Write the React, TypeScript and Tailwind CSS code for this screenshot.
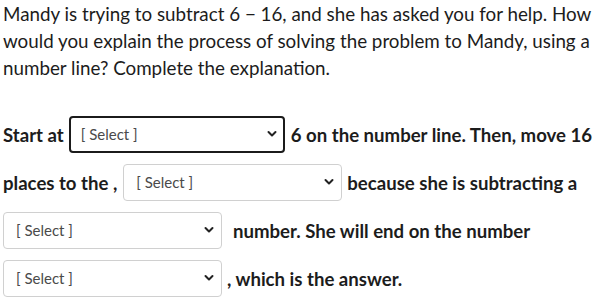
import { useState } from "react";

function Dropdown({ width, focused }: { width: string; focused?: boolean }) {
    const [value, setValue] = useState("");

    return (
        <div className={`relative h-[37px] ${width}`}>
            <select
                value={value}
                onChange={(e) => setValue(e.target.value)}
                className={`h-full w-full appearance-none rounded-[4px] bg-white pr-8 text-[15px] font-normal text-[#4a4a4a] outline-none ${
                    focused ? "border-2 border-[#1b1b1b] pl-[10px]" : "border border-[#d0d0d0] pl-[12px]"
                }`}
            >
                <option value="">[ Select ]</option>
                <option value="a">Option A</option>
                <option value="b">Option B</option>
            </select>
            {/* chevron */}
            <svg
                className="pointer-events-none absolute right-[8px] top-1/2 -translate-y-1/2"
                width="10"
                height="7"
                viewBox="0 0 10 7"
                fill="none"
            >
                <path d="M1.5 1.5 L5 5 L8.5 1.5" stroke="#222" strokeWidth="2" strokeLinecap="round" strokeLinejoin="round" />
            </svg>
        </div>
    );
}

export default function App() {
    return (
        <div className="h-[299px] w-[604px] overflow-hidden bg-white px-[3px] text-[#1c1c1c] font-['Lato','Liberation_Sans',sans-serif]">
            <p className="text-[18.8px] leading-[27px] font-normal">
                Mandy is trying to subtract 6 − 16, and she has asked you for help. How would you explain
                the process of solving the problem to Mandy, using a number line? Complete the explanation.
            </p>

            <div className="mt-[29px] flex flex-col text-[18.6px] font-bold">
                <div className="flex h-12 items-center">
                    <span className="pt-[3px]">Start at</span>
                    <div className="ml-[5px]">
                        <Dropdown width="w-[216px]" focused />
                    </div>
                    <span className="ml-[6px] pt-[3px]">6 on the number line. Then, move 16</span>
                </div>
                <div className="flex h-12 items-center">
                    <span className="pt-[3px]">places to the ,</span>
                    <div className="ml-[6px]">
                        <Dropdown width="w-[219px]" />
                    </div>
                    <span className="ml-[5px] pt-[3px]">because she is subtracting a</span>
                </div>
                <div className="flex h-12 items-center">
                    <Dropdown width="w-[219px]" />
                    <span className="ml-[11px] pt-[3px]">number. She will end on the number</span>
                </div>
                <div className="flex h-12 items-center">
                    <Dropdown width="w-[219px]" />
                    <span className="ml-[5px] pt-[3px]">, which is the answer.</span>
                </div>
            </div>
        </div>
    );
}
